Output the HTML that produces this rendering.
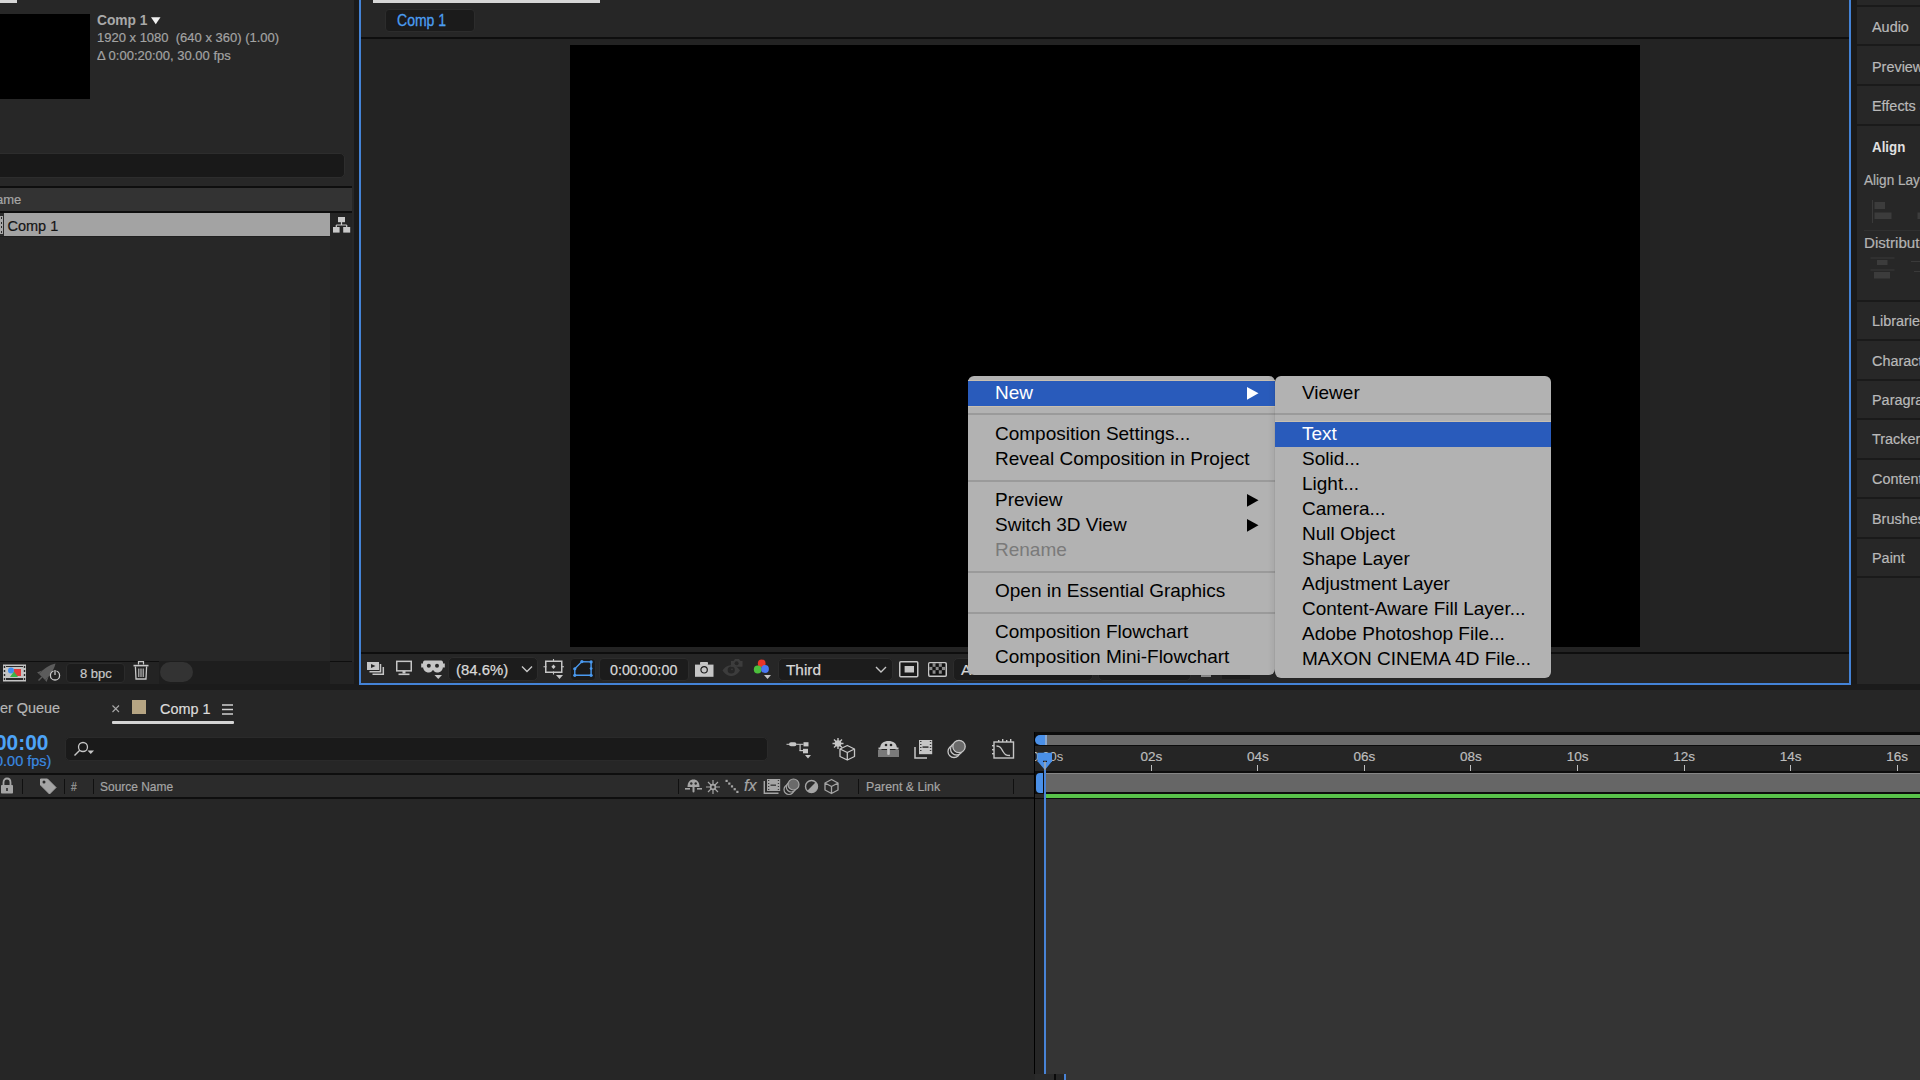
<!DOCTYPE html>
<html><head><meta charset="utf-8"><style>
html,body{margin:0;padding:0;width:1920px;height:1080px;overflow:hidden;background:#1a1a1a;}
body{position:relative;font-family:"Liberation Sans",sans-serif;}
body>div,body>svg{position:absolute;}
.t{white-space:pre;}
</style></head><body>
<div style="left:0px;top:0px;width:354px;height:684px;background:#272727;"></div>
<div style="left:0px;top:0px;width:17px;height:3px;background:#d6d6d6;"></div>
<div style="left:0px;top:14px;width:90px;height:85px;background:#000;"></div>
<div class="t" style="left:97px;top:12px;font-size:14.5px;line-height:16px;color:#a9a9a9;font-weight:700;transform:scaleX(0.95);transform-origin:0 0;">Comp 1</div>
<svg style="left:151px;top:17px;" width="10" height="8" viewBox="0 0 10 8"><path d="M0 0.3 L9.5 0.3 L4.75 7.3 Z" fill="#f0f0f0"/></svg>
<div class="t" style="left:97px;top:30px;font-size:13px;line-height:15px;color:#a3a3a3;font-weight:400;-webkit-text-stroke:0.2px #a3a3a3;">1920 x 1080 &nbsp;(640 x 360) (1.00)</div>
<div class="t" style="left:97px;top:48px;font-size:13px;line-height:15px;color:#a3a3a3;font-weight:400;-webkit-text-stroke:0.2px #a3a3a3;">Δ 0:00:20:00, 30.00 fps</div>
<div style="left:-6px;top:152.5px;width:351px;height:25px;background:#191919;border:1px solid #2d2d2d;border-radius:5px;box-sizing:border-box;"></div>
<div style="left:0px;top:186px;width:352px;height:2px;background:#0e0e0e;"></div>
<div style="left:0px;top:188px;width:352px;height:23px;background:#333333;"></div>
<div class="t" style="left:-4px;top:192px;font-size:13px;line-height:15px;color:#a6a6a6;font-weight:400;-webkit-text-stroke:0.2px #a6a6a6;">ame</div>
<div style="left:0px;top:211px;width:352px;height:2px;background:#0e0e0e;"></div>
<div style="left:330px;top:213px;width:22px;height:448px;background:#242424;"></div>
<div style="left:0px;top:213px;width:4px;height:23px;background:#2b2b2b;"></div>
<div style="left:0px;top:216px;width:3.2px;height:18px;background:#a8a8a8;"></div>
<div style="left:0.8px;top:217px;width:1.6px;height:2px;background:#2a2a2a;"></div>
<div style="left:0.8px;top:221.5px;width:1.6px;height:2px;background:#2a2a2a;"></div>
<div style="left:0.8px;top:226px;width:1.6px;height:2px;background:#2a2a2a;"></div>
<div style="left:0.8px;top:230.5px;width:1.6px;height:2px;background:#2a2a2a;"></div>
<div style="left:4px;top:213px;width:326px;height:23px;background:#a3a3a3;"></div>
<div class="t" style="left:7.5px;top:218px;font-size:14.5px;line-height:16px;color:#141414;font-weight:400;-webkit-text-stroke:0.2px #141414;">Comp 1</div>
<div style="left:0px;top:236px;width:330px;height:1px;background:#1f1f1f;"></div>
<svg style="left:332px;top:216px;" width="20" height="18" viewBox="0 0 20 18"><rect x="6" y="1" width="7" height="5.2" fill="#c8c8c8"/><path d="M9.5 6 V9 M4.3 9 H14.7 M4.3 9 V11 M14.7 9 V11" stroke="#c8c8c8" stroke-width="1.2" fill="none"/><rect x="1" y="11" width="6.6" height="5.6" fill="#c8c8c8"/><rect x="11.2" y="11" width="7" height="5.6" fill="#c8c8c8"/></svg>
<div style="left:0px;top:661px;width:159px;height:1px;background:#0e0e0e;"></div>
<div style="left:330px;top:661px;width:22px;height:1px;background:#0e0e0e;"></div>
<div style="left:0px;top:662px;width:354px;height:22px;background:#232323;"></div>
<div style="left:159px;top:661px;width:171px;height:23px;background:#1e1e1e;"></div>
<svg style="left:3px;top:664px;" width="24" height="19" viewBox="0 0 24 19"><rect x="0" y="0.5" width="23" height="17" fill="#c4c4c4"/><rect x="3" y="2" width="17" height="14" fill="#2a2a2a"/><g fill="#2a2a2a"><rect x="0.8" y="2" width="1.4" height="2"/><rect x="0.8" y="6" width="1.4" height="2"/><rect x="0.8" y="10" width="1.4" height="2"/><rect x="0.8" y="14" width="1.4" height="2"/><rect x="20.8" y="2" width="1.4" height="2"/><rect x="20.8" y="6" width="1.4" height="2"/><rect x="20.8" y="10" width="1.4" height="2"/><rect x="20.8" y="14" width="1.4" height="2"/></g><rect x="3" y="3" width="17" height="11" fill="#c4c4c4"/><circle cx="8" cy="6.5" r="3" fill="#3f8ef0"/><rect x="11" y="5" width="7" height="7" fill="#e23c3c"/><path d="M7 13 L11 7.5 L15 13 Z" fill="#3bb24a"/></svg>
<svg style="left:36px;top:661px;" width="26" height="22" viewBox="0 0 26 22"><path d="M3 13 C7 8 13 4 19.5 2.5 C18 9 14 15 9 19 Z" fill="#5c5c5c"/><path d="M3 13 L1 11.5 L6 9.5 Z M9 19 L10.5 21 L12.5 16 Z" fill="#5c5c5c"/><path d="M6 16 L2.5 19.5" stroke="#5c5c5c" stroke-width="1.5"/><circle cx="19" cy="14.4" r="4.6" fill="#222" stroke="#c8c8c8" stroke-width="1.3"/><rect x="17.6" y="8.5" width="2.8" height="5" fill="#222"/><path d="M19 9 V14" stroke="#c8c8c8" stroke-width="1.3"/></svg>
<div style="left:66px;top:663px;width:59px;height:20px;background:#1c1c1c;border:1px solid #2b2b2b;border-radius:4px;box-sizing:border-box;"></div>
<div class="t" style="left:80px;top:666px;font-size:13px;line-height:15px;color:#c8c8c8;font-weight:400;-webkit-text-stroke:0.2px #c8c8c8;">8 bpc</div>
<svg style="left:132px;top:660px;" width="18" height="21" viewBox="0 0 18 21"><path d="M6.5 4.5 V1.6 H11.5 V4.5" stroke="#c8c8c8" stroke-width="1.2" fill="none"/><rect x="1.5" y="4.8" width="15" height="1.6" fill="#c8c8c8"/><path d="M3.4 6.5 L4 19 H14 L14.6 6.5" stroke="#c8c8c8" stroke-width="1.3" fill="none"/><path d="M6.8 8.5 V17 M9 8.5 V17 M11.2 8.5 V17" stroke="#c8c8c8" stroke-width="1.1"/></svg>
<div style="left:160px;top:662px;width:33px;height:20px;background:#333333;border-radius:10px;"></div>
<div style="left:359px;top:-2px;width:1492px;height:687px;background:#232323;border:2px solid #4483d6;box-sizing:border-box;"></div>
<div style="left:361px;top:0px;width:1488px;height:37px;background:#262626;"></div>
<div style="left:373px;top:0px;width:227px;height:3px;background:#d6d6d6;"></div>
<div style="left:385px;top:9px;width:90px;height:23px;background:#1b1b1b;border:1px solid #2c2c2c;border-radius:4px;box-sizing:border-box;"></div>
<div class="t" style="left:397px;top:11px;font-size:16.5px;line-height:18px;color:#4b9ef2;font-weight:400;transform:scaleX(0.85);transform-origin:0 0;-webkit-text-stroke:0.3px #4b9ef2;">Comp 1</div>
<div style="left:361px;top:37px;width:1488px;height:2px;background:#0e0e0e;"></div>
<div style="left:570px;top:45px;width:1070px;height:602px;background:#000;"></div>
<div style="left:361px;top:652px;width:1488px;height:2px;background:#0e0e0e;"></div>
<div style="left:361px;top:654px;width:1488px;height:29px;background:#262626;"></div>
<svg style="left:365px;top:660px;" width="22" height="18" viewBox="0 0 22 18"><rect x="2" y="2" width="12" height="8" fill="#c6c6c6"/><path d="M6 4 L10.5 6 L6 8 Z" fill="#262626"/><path d="M4.5 11.8 H15.5 V4" stroke="#c6c6c6" stroke-width="1.5" fill="none"/><path d="M7.5 14.3 H18.3 V7" stroke="#c6c6c6" stroke-width="1.5" fill="none"/></svg>
<svg style="left:394px;top:659px;" width="20" height="18" viewBox="0 0 20 18"><rect x="2.75" y="2.35" width="14.5" height="9.5" fill="none" stroke="#c6c6c6" stroke-width="1.5"/><rect x="8.5" y="12" width="3" height="2.5" fill="#c6c6c6"/><rect x="4.5" y="14.5" width="11" height="1.6" fill="#c6c6c6"/></svg>
<svg style="left:420px;top:659px;" width="26" height="22" viewBox="0 0 26 22"><path d="M3 3.5 C3 1.8 4.5 1.5 6 1.5 H20 C21.5 1.5 23 1.8 23 3.5 V7 C23 11 21 13.5 17 13.5 C15 13.5 14 12 13 11 C12 12 11 13.5 9 13.5 C5 13.5 3 11 3 7 Z" fill="#c6c6c6"/><circle cx="8.8" cy="6.8" r="2" fill="#262626"/><circle cx="17" cy="6.8" r="2" fill="#262626"/><rect x="1.2" y="4.5" width="1.8" height="4" fill="#c6c6c6"/><rect x="23" y="4.5" width="1.8" height="4" fill="#c6c6c6"/><path d="M14.5 16 H22 L18.25 20 Z" fill="#c6c6c6"/></svg>
<div style="left:448px;top:657px;width:90px;height:24px;background:#1c1c1c;border:1px solid #2c2c2c;border-radius:5px;box-sizing:border-box;"></div>
<div class="t" style="left:456px;top:661px;font-size:15.5px;line-height:17px;color:#d8d8d8;font-weight:400;transform:scaleX(0.96);transform-origin:0 0;-webkit-text-stroke:0.25px #d8d8d8;">(84.6%)</div>
<svg style="left:520px;top:664px;" width="14" height="10" viewBox="0 0 14 10"><path d="M2 2.5 L7 7.5 L12 2.5" stroke="#c6c6c6" stroke-width="1.4" fill="none"/></svg>
<svg style="left:542px;top:658px;" width="23" height="23" viewBox="0 0 23 23"><rect x="3.75" y="3.25" width="16" height="11" fill="none" stroke="#c6c6c6" stroke-width="1.5"/><path d="M11.5 1 V4 M11.5 13.5 V16.5 M1.5 8.75 H4.5 M19 8.75 H22" stroke="#c6c6c6" stroke-width="1.1"/><path d="M11.5 6.6 L13.6 8.75 L11.5 10.9 L9.4 8.75 Z" fill="#c6c6c6"/><path d="M14 17 H21 L17.5 21 Z" fill="#c6c6c6"/></svg>
<div style="left:570px;top:658px;width:26px;height:23px;background:#1a1a1a;border:1px solid #2a2a2a;border-radius:4px;box-sizing:border-box;"></div>
<svg style="left:572px;top:659px;" width="22" height="20" viewBox="0 0 22 20"><path d="M2.8 9.75 L9.9 2.6 L19.1 2.9 V16.3 H2.8 Z" fill="none" stroke="#4a9af0" stroke-width="1.4"/><g fill="#4a9af0"><circle cx="2.8" cy="9.75" r="1.6"/><circle cx="9.9" cy="2.6" r="1.6"/><circle cx="19.1" cy="2.9" r="1.6"/><circle cx="19.1" cy="9.6" r="1.4"/><circle cx="19.1" cy="16.3" r="1.6"/><circle cx="2.8" cy="16.3" r="1.6"/></g></svg>
<div style="left:599px;top:658px;width:90px;height:23px;background:#1c1c1c;border:1px solid #2c2c2c;border-radius:4px;box-sizing:border-box;"></div>
<div class="t" style="left:610px;top:661px;font-size:15.5px;line-height:17px;color:#d8d8d8;font-weight:400;transform:scaleX(0.92);transform-origin:0 0;-webkit-text-stroke:0.25px #d8d8d8;">0:00:00:00</div>
<svg style="left:694px;top:660px;" width="21" height="18" viewBox="0 0 21 18"><rect x="1" y="4.6" width="18.5" height="12.2" fill="#c6c6c6"/><rect x="6" y="2" width="8" height="3" fill="#c6c6c6" rx="0.8"/><circle cx="10.1" cy="9.8" r="3.2" fill="none" stroke="#1e1e1e" stroke-width="1.2"/></svg>
<svg style="left:720px;top:656px;" width="26" height="23" viewBox="0 0 26 23"><path d="M2.5 14.5 C5.5 10 9 9.3 11.25 9.3 C13.5 9.3 17 10 20 14.5 C17 19 13.5 20 11.25 20 C9 20 5.5 19 2.5 14.5 Z" fill="#3c3c3c"/><circle cx="11.25" cy="14" r="3.6" fill="#262626"/><circle cx="12" cy="13.3" r="0.9" fill="#3c3c3c"/><path d="M11 5 H13.5 L15 3 H19 L20.5 5 H22.5 V10.8 H11 Z" fill="#3c3c3c"/><circle cx="16.6" cy="7.3" r="2" fill="#262626"/></svg>
<svg style="left:752px;top:657px;" width="22" height="24" viewBox="0 0 22 24"><circle cx="9.7" cy="6.4" r="3.9" fill="#e8352a"/><circle cx="5.7" cy="12.5" r="3.9" fill="#4cbf3c"/><circle cx="13" cy="12" r="3.9" fill="#4a78f2"/><path d="M12 18 H19 L15.5 22 Z" fill="#c6c6c6"/></svg>
<div style="left:778px;top:658px;width:115px;height:23px;background:#1c1c1c;border:1px solid #2c2c2c;border-radius:5px;box-sizing:border-box;"></div>
<div class="t" style="left:786px;top:661px;font-size:15.5px;line-height:17px;color:#d8d8d8;font-weight:400;transform:scaleX(0.99);transform-origin:0 0;-webkit-text-stroke:0.25px #d8d8d8;">Third</div>
<svg style="left:874px;top:665px;" width="14" height="9" viewBox="0 0 14 9"><path d="M2 2 L7 7 L12 2" stroke="#c6c6c6" stroke-width="1.4" fill="none"/></svg>
<svg style="left:898px;top:660px;" width="22" height="19" viewBox="0 0 22 19"><rect x="1.75" y="1.75" width="18" height="15" fill="#1a1a1a" stroke="#c6c6c6" stroke-width="1.5" rx="1"/><rect x="6.6" y="6" width="9.4" height="6.5" fill="#c6c6c6"/></svg>
<svg style="left:927px;top:661px;" width="21" height="17" viewBox="0 0 21 17"><rect x="1.75" y="1.75" width="17.5" height="13.5" fill="#111" stroke="#c6c6c6" stroke-width="1.5" rx="1"/><rect x="2.50" y="2.50" width="3.1" height="3.4" fill="#111"/><rect x="5.60" y="2.50" width="3.1" height="3.4" fill="#8a8a8a"/><rect x="8.70" y="2.50" width="3.1" height="3.4" fill="#111"/><rect x="11.80" y="2.50" width="3.1" height="3.4" fill="#8a8a8a"/><rect x="14.90" y="2.50" width="3.1" height="3.4" fill="#111"/><rect x="2.50" y="5.90" width="3.1" height="3.4" fill="#8a8a8a"/><rect x="5.60" y="5.90" width="3.1" height="3.4" fill="#111"/><rect x="8.70" y="5.90" width="3.1" height="3.4" fill="#8a8a8a"/><rect x="11.80" y="5.90" width="3.1" height="3.4" fill="#111"/><rect x="14.90" y="5.90" width="3.1" height="3.4" fill="#8a8a8a"/><rect x="2.50" y="9.30" width="3.1" height="3.4" fill="#111"/><rect x="5.60" y="9.30" width="3.1" height="3.4" fill="#8a8a8a"/><rect x="8.70" y="9.30" width="3.1" height="3.4" fill="#111"/><rect x="11.80" y="9.30" width="3.1" height="3.4" fill="#8a8a8a"/><rect x="14.90" y="9.30" width="3.1" height="3.4" fill="#111"/></svg>
<div style="left:953px;top:658px;width:140px;height:23px;background:#1c1c1c;border:1px solid #2c2c2c;border-radius:5px;box-sizing:border-box;"></div>
<div class="t" style="left:961px;top:661px;font-size:15.5px;line-height:17px;color:#d8d8d8;font-weight:400;-webkit-text-stroke:0.2px #d8d8d8;">A</div>
<div style="left:1098px;top:658px;width:93px;height:23px;background:#1c1c1c;border:1px solid #2c2c2c;border-radius:5px;box-sizing:border-box;"></div>
<div style="left:1201px;top:675px;width:10px;height:1.5px;background:#8a8a8a;"></div>
<div style="left:1226px;top:675px;width:10px;height:1.5px;background:#8a8a8a;"></div>
<div style="left:1222px;top:674px;width:28px;height:5px;background:#1c1c1c;"></div>
<div style="left:1857px;top:0px;width:63px;height:684px;background:#272727;"></div>
<div style="left:1857px;top:5px;width:63px;height:2px;background:#1a1a1a;"></div>
<div style="left:1857px;top:44px;width:63px;height:2px;background:#1a1a1a;"></div>
<div style="left:1857px;top:84px;width:63px;height:2px;background:#1a1a1a;"></div>
<div style="left:1857px;top:124px;width:63px;height:2px;background:#1a1a1a;"></div>
<div style="left:1857px;top:300px;width:63px;height:2px;background:#1a1a1a;"></div>
<div style="left:1857px;top:339px;width:63px;height:2px;background:#1a1a1a;"></div>
<div style="left:1857px;top:379px;width:63px;height:2px;background:#1a1a1a;"></div>
<div style="left:1857px;top:418px;width:63px;height:2px;background:#1a1a1a;"></div>
<div style="left:1857px;top:458px;width:63px;height:2px;background:#1a1a1a;"></div>
<div style="left:1857px;top:497px;width:63px;height:2px;background:#1a1a1a;"></div>
<div style="left:1857px;top:537px;width:63px;height:2px;background:#1a1a1a;"></div>
<div style="left:1857px;top:576px;width:63px;height:2px;background:#1a1a1a;"></div>
<div class="t" style="left:1872px;top:18px;font-size:15.5px;line-height:17px;color:#b9b9b9;font-weight:400;-webkit-text-stroke:0.2px #b9b9b9;transform:scaleX(0.93);transform-origin:0 0;">Audio</div>
<div class="t" style="left:1872px;top:58px;font-size:15.5px;line-height:17px;color:#b9b9b9;font-weight:400;-webkit-text-stroke:0.2px #b9b9b9;transform:scaleX(0.93);transform-origin:0 0;">Preview</div>
<div class="t" style="left:1872px;top:97px;font-size:15.5px;line-height:17px;color:#b9b9b9;font-weight:400;-webkit-text-stroke:0.2px #b9b9b9;transform:scaleX(0.93);transform-origin:0 0;">Effects &amp;</div>
<div class="t" style="left:1872px;top:312px;font-size:15.5px;line-height:17px;color:#b9b9b9;font-weight:400;-webkit-text-stroke:0.2px #b9b9b9;transform:scaleX(0.93);transform-origin:0 0;">Libraries</div>
<div class="t" style="left:1872px;top:352px;font-size:15.5px;line-height:17px;color:#b9b9b9;font-weight:400;-webkit-text-stroke:0.2px #b9b9b9;transform:scaleX(0.93);transform-origin:0 0;">Character</div>
<div class="t" style="left:1872px;top:391px;font-size:15.5px;line-height:17px;color:#b9b9b9;font-weight:400;-webkit-text-stroke:0.2px #b9b9b9;transform:scaleX(0.93);transform-origin:0 0;">Paragraph</div>
<div class="t" style="left:1872px;top:430px;font-size:15.5px;line-height:17px;color:#b9b9b9;font-weight:400;-webkit-text-stroke:0.2px #b9b9b9;transform:scaleX(0.93);transform-origin:0 0;">Tracker</div>
<div class="t" style="left:1872px;top:470px;font-size:15.5px;line-height:17px;color:#b9b9b9;font-weight:400;-webkit-text-stroke:0.2px #b9b9b9;transform:scaleX(0.93);transform-origin:0 0;">Content</div>
<div class="t" style="left:1872px;top:510px;font-size:15.5px;line-height:17px;color:#b9b9b9;font-weight:400;-webkit-text-stroke:0.2px #b9b9b9;transform:scaleX(0.93);transform-origin:0 0;">Brushes</div>
<div class="t" style="left:1872px;top:549px;font-size:15.5px;line-height:17px;color:#b9b9b9;font-weight:400;-webkit-text-stroke:0.2px #b9b9b9;transform:scaleX(0.93);transform-origin:0 0;">Paint</div>
<div class="t" style="left:1872px;top:138px;font-size:15.5px;line-height:17px;color:#e0e0e0;font-weight:700;transform:scaleX(0.86);transform-origin:0 0;">Align</div>
<div class="t" style="left:1864px;top:172px;font-size:14px;line-height:16px;color:#b3b3b3;font-weight:400;-webkit-text-stroke:0.2px #b3b3b3;transform:scaleX(0.97);transform-origin:0 0;">Align Layers to:</div>
<div class="t" style="left:1864px;top:235px;font-size:14px;line-height:16px;color:#b3b3b3;font-weight:400;-webkit-text-stroke:0.2px #b3b3b3;transform:scaleX(1.08);transform-origin:0 0;">Distribute Layers:</div>
<div style="left:1864px;top:229.5px;width:56px;height:1px;background:#303030;"></div>
<svg style="left:1870px;top:199px;" width="50" height="25" viewBox="0 0 50 25"><rect x="2" y="1" width="1" height="23" fill="#3a3a3a"/><rect x="4.5" y="3" width="10.5" height="7" fill="#3c3c3c"/><rect x="4.5" y="13.5" width="17" height="6.5" fill="#3c3c3c"/><rect x="47.5" y="13.5" width="3" height="6.5" fill="#3c3c3c"/></svg>
<svg style="left:1868px;top:256px;" width="52" height="25" viewBox="0 0 52 25"><rect x="2.5" y="1.5" width="24" height="1" fill="#3a3a3a"/><rect x="9" y="4" width="10.5" height="5" fill="#3c3c3c"/><rect x="2.5" y="13.5" width="24" height="1" fill="#3a3a3a"/><rect x="6" y="16" width="16" height="6.5" fill="#3c3c3c"/><rect x="43" y="5" width="9" height="1" fill="#3a3a3a"/><rect x="46" y="15" width="6" height="1" fill="#3a3a3a"/></svg>
<div style="left:0px;top:684px;width:359px;height:6px;background:#1b1b1b;"></div>
<div style="left:359px;top:685px;width:1492px;height:5px;background:#1b1b1b;"></div>
<div style="left:1851px;top:684px;width:69px;height:6px;background:#1b1b1b;"></div>
<div style="left:0px;top:690px;width:1920px;height:390px;background:#262626;"></div>
<div class="t" style="left:0px;top:699px;font-size:15.5px;line-height:17px;color:#b5b5b5;font-weight:400;-webkit-text-stroke:0.2px #b5b5b5;transform:scaleX(0.93);transform-origin:0 0;">er Queue</div>
<svg style="left:110px;top:703px;" width="12" height="12" viewBox="0 0 12 12"><path d="M2.5 2.5 L9 9 M9 2.5 L2.5 9" stroke="#a8a8a8" stroke-width="1.1"/></svg>
<div style="left:132px;top:700px;width:14px;height:14px;background:#b6a583;"></div>
<div class="t" style="left:160px;top:700px;font-size:15.5px;line-height:17px;color:#dcdcdc;font-weight:400;-webkit-text-stroke:0.2px #dcdcdc;transform:scaleX(0.93);transform-origin:0 0;">Comp 1</div>
<svg style="left:221px;top:703px;" width="14" height="13" viewBox="0 0 14 13"><path d="M1 2 H12 M1 6.5 H12 M1 11 H12" stroke="#cfcfcf" stroke-width="1.3"/></svg>
<div style="left:112px;top:721px;width:122px;height:3px;background:#d4d4d4;border-radius:1px;"></div>
<div class="t" style="left:-5.4px;top:731px;font-size:21.4px;line-height:24px;color:#4da3f7;font-weight:700;transform:scaleX(0.975);transform-origin:0 0;">00:00</div>
<div class="t" style="left:-5px;top:753px;font-size:14.5px;line-height:16px;color:#3a8ae0;font-weight:400;-webkit-text-stroke:0.2px #3a8ae0;">0.00 fps)</div>
<div style="left:65px;top:737px;width:703px;height:24px;background:#1a1a1a;border:1px solid #2a2a2a;border-radius:5px;box-sizing:border-box;"></div>
<svg style="left:72px;top:740px;" width="26" height="18" viewBox="0 0 26 18"><circle cx="11" cy="7" r="4.5" fill="none" stroke="#c6c6c6" stroke-width="1.3"/><path d="M7.8 10.2 L2.5 15.5" stroke="#c6c6c6" stroke-width="1.4"/><path d="M15.5 10.5 H22 L18.75 14 Z" fill="#c6c6c6"/></svg>
<svg style="left:786px;top:740px;" width="28" height="21" viewBox="0 0 28 21"><rect x="3" y="2.3" width="7.5" height="4" rx="2" fill="#c6c6c6"/><rect x="0.5" y="3.8" width="3" height="1" fill="#c6c6c6"/><rect x="10.5" y="3.8" width="7" height="1" fill="#c6c6c6"/><rect x="17.5" y="2.2" width="5" height="4.2" fill="#c6c6c6"/><rect x="13.5" y="4.3" width="1.2" height="6.5" fill="#c6c6c6"/><rect x="13.5" y="10" width="4" height="1.2" fill="#c6c6c6"/><rect x="17" y="8.8" width="5" height="4.5" fill="#c6c6c6"/><path d="M19 15 H25 L22 18.5 Z" fill="#c6c6c6"/></svg>
<svg style="left:830px;top:736px;" width="28" height="26" viewBox="0 0 28 26"><g stroke="#c6c6c6" stroke-width="1.4"><path d="M8 2 V13 M2.5 7.5 H13.5 M4 3.5 L12 11.5 M12 3.5 L4 11.5"/></g><circle cx="8" cy="7.5" r="3.3" fill="#c6c6c6"/><path d="M17.3 9.5 L24.5 13 V20.5 L17.3 24 L10 20.5 V13 Z M10 13 L17.3 16.5 L24.5 13 M17.3 16.5 V24" fill="none" stroke="#c6c6c6" stroke-width="1.3" stroke-linejoin="round"/></svg>
<svg style="left:876px;top:739px;" width="26" height="22" viewBox="0 0 26 22"><rect x="2" y="11" width="21" height="7" fill="#7a7a7a"/><path d="M4 10 C4 4 8 2 12.5 2 C17 2 21 4 21 10 Z" fill="#c6c6c6"/><rect x="2.5" y="8.5" width="3" height="2" fill="#c6c6c6"/><rect x="19.5" y="8.5" width="3" height="2" fill="#c6c6c6"/><circle cx="10" cy="6" r="1.3" fill="#262626"/><circle cx="15" cy="6" r="1.3" fill="#262626"/><rect x="11.2" y="9" width="2.6" height="7" rx="1.3" fill="#c6c6c6"/></svg>
<svg style="left:912px;top:738px;" width="23" height="22" viewBox="0 0 23 22"><path d="M3 9 V20 H15" stroke="#c6c6c6" stroke-width="1.5" fill="none"/><rect x="7" y="2" width="13.2" height="14.2" fill="#c6c6c6"/><g fill="#3a3a3a"><rect x="8" y="3" width="1.5" height="1"/><rect x="8" y="6" width="1.5" height="1"/><rect x="8" y="9" width="1.5" height="1"/><rect x="8" y="12" width="1.5" height="1"/><rect x="17.8" y="3" width="1.5" height="1"/><rect x="17.8" y="6" width="1.5" height="1"/><rect x="17.8" y="9" width="1.5" height="1"/><rect x="17.8" y="12" width="1.5" height="1"/><rect x="10.5" y="8.3" width="6" height="1.6"/></g></svg>
<svg style="left:946px;top:738px;" width="24" height="22" viewBox="0 0 24 22"><circle cx="8" cy="13.5" r="6" fill="none" stroke="#c6c6c6" stroke-width="1.3"/><circle cx="10.5" cy="11" r="6" fill="#262626" stroke="#c6c6c6" stroke-width="1.3"/><circle cx="13" cy="8.5" r="6.2" fill="#6a6a6a" stroke="#c6c6c6" stroke-width="1.3"/></svg>
<svg style="left:991px;top:738px;" width="25" height="22" viewBox="0 0 25 22"><rect x="3" y="4" width="19.5" height="16" fill="none" stroke="#c6c6c6" stroke-width="1.4"/><g fill="#c6c6c6"><rect x="7" y="2" width="1.4" height="2"/><rect x="11" y="1" width="1.4" height="3"/><rect x="15" y="2" width="1.4" height="2"/><rect x="19" y="1" width="1.4" height="3"/><rect x="1" y="7" width="2" height="1.4"/><rect x="1" y="11" width="2" height="1.4"/><rect x="1" y="15" width="2" height="1.4"/></g><path d="M5.5 8 C9 8 10 10 12 13.5 C14 17 15.5 17.5 19 17.5" stroke="#c6c6c6" stroke-width="1.3" fill="none"/></svg>
<div style="left:0px;top:773px;width:1034px;height:2px;background:#0e0e0e;"></div>
<div style="left:0px;top:775px;width:1034px;height:22px;background:#2b2b2b;"></div>
<div style="left:0px;top:797px;width:1034px;height:2px;background:#0e0e0e;"></div>
<svg style="left:0px;top:777px;" width="16" height="18" viewBox="0 0 16 18"><path d="M3.5 8 V5.5 C3.5 3 5 1.5 7 1.5 C9 1.5 10.5 3 10.5 5.5 V8" stroke="#a5a5a5" stroke-width="1.8" fill="none"/><rect x="1" y="8" width="12" height="8.5" rx="0.8" fill="#a5a5a5"/><rect x="6.2" y="11" width="1.6" height="3" fill="#2b2b2b"/></svg>
<div style="left:22px;top:779px;width:1.2px;height:15px;background:#101010;"></div>
<div style="left:64px;top:779px;width:1.2px;height:15px;background:#101010;"></div>
<div style="left:93px;top:779px;width:1.2px;height:15px;background:#101010;"></div>
<div style="left:678px;top:779px;width:1.2px;height:15px;background:#101010;"></div>
<div style="left:858px;top:779px;width:1.2px;height:15px;background:#101010;"></div>
<div style="left:1013px;top:779px;width:1.2px;height:15px;background:#101010;"></div>
<svg style="left:39px;top:777px;" width="19" height="19" viewBox="0 0 19 19"><path d="M1.5 2 H8.5 L17 10.5 L10.5 17 L1.5 8 Z" fill="#a5a5a5" stroke="#a5a5a5" stroke-width="1" stroke-linejoin="round"/><circle cx="5" cy="5" r="1.5" fill="#2b2b2b"/></svg>
<div class="t" style="left:71px;top:780px;font-size:12px;line-height:14px;color:#a0a0a0;font-weight:400;-webkit-text-stroke:0.2px #a0a0a0;transform:scaleX(0.85);transform-origin:0 0;">#</div>
<div class="t" style="left:100px;top:779px;font-size:13px;line-height:15px;color:#a5a5a5;font-weight:400;-webkit-text-stroke:0.2px #a5a5a5;transform:scaleX(0.92);transform-origin:0 0;">Source Name</div>
<div class="t" style="left:866px;top:779px;font-size:13px;line-height:15px;color:#a5a5a5;font-weight:400;-webkit-text-stroke:0.2px #a5a5a5;transform:scaleX(0.95);transform-origin:0 0;">Parent &amp; Link</div>
<svg style="left:684px;top:777px;" width="19" height="18" viewBox="0 0 19 18"><path d="M3.5 10 C3.5 5 6 2.5 9.5 2.5 C13 2.5 15.5 5 15.5 10 Z" fill="#a5a5a5"/><circle cx="7.3" cy="6.5" r="1.2" fill="#2b2b2b"/><circle cx="11.7" cy="6.5" r="1.2" fill="#2b2b2b"/><rect x="1" y="11" width="5" height="1.6" fill="#a5a5a5"/><rect x="13" y="11" width="5" height="1.6" fill="#a5a5a5"/><rect x="8.5" y="9" width="2" height="6.5" rx="1" fill="#a5a5a5"/></svg>
<svg style="left:705px;top:779px;" width="16" height="16" viewBox="0 0 16 16"><g stroke="#a5a5a5" stroke-width="1.2"><path d="M8 1 V15 M1 8 H15 M3 3 L13 13 M13 3 L3 13"/></g><circle cx="8" cy="8" r="3.2" fill="#a5a5a5"/><circle cx="8" cy="8" r="1.5" fill="#2b2b2b"/></svg>
<svg style="left:724px;top:779px;" width="16" height="15" viewBox="0 0 16 15"><rect x="1.5" y="0.8" width="2.2" height="2.2" fill="#a5a5a5"/><rect x="4.2" y="3.5" width="2.2" height="2.2" fill="#a5a5a5"/><rect x="6.9" y="6.3" width="2.2" height="2.2" fill="#a5a5a5"/><rect x="9.6" y="9.1" width="2.2" height="2.2" fill="#a5a5a5"/><rect x="12.3" y="11.8" width="2.2" height="2.2" fill="#a5a5a5"/></svg>
<div class="t" style="left:744px;top:776px;font-size:17px;line-height:19px;color:#a5a5a5;font-weight:400;-webkit-text-stroke:0.2px #a5a5a5;transform:scaleX(0.95);transform-origin:0 0;font-style:italic;">fx</div>
<svg style="left:762px;top:777px;" width="19" height="19" viewBox="0 0 19 19"><path d="M2.3 4 V16.3 H16.5" stroke="#a5a5a5" stroke-width="1.4" fill="none"/><rect x="5" y="2" width="13.2" height="12" fill="#a5a5a5"/><g fill="#3a3a3a"><rect x="6" y="3" width="1.3" height="1"/><rect x="6" y="6" width="1.3" height="1"/><rect x="6" y="9" width="1.3" height="1"/><rect x="6" y="12" width="1.3" height="1"/><rect x="15.8" y="3" width="1.3" height="1"/><rect x="15.8" y="6" width="1.3" height="1"/><rect x="15.8" y="9" width="1.3" height="1"/><rect x="15.8" y="12" width="1.3" height="1"/><rect x="8.5" y="7.5" width="5.5" height="1.4"/></g></svg>
<svg style="left:782px;top:776px;" width="20" height="21" viewBox="0 0 20 21"><circle cx="7" cy="13.5" r="5" fill="none" stroke="#a5a5a5" stroke-width="1.2"/><circle cx="9.3" cy="11" r="5" fill="#2b2b2b" stroke="#a5a5a5" stroke-width="1.2"/><circle cx="11.5" cy="8.5" r="5.5" fill="#6a6a6a" stroke="#a5a5a5" stroke-width="1.2"/></svg>
<svg style="left:803px;top:778px;" width="17" height="17" viewBox="0 0 17 17"><circle cx="8.5" cy="8.5" r="6" fill="#2b2b2b" stroke="#a5a5a5" stroke-width="1.4"/><path d="M12.7 4.2 A6 6 0 0 1 4.3 12.8 Z" fill="#a5a5a5"/></svg>
<svg style="left:823px;top:778px;" width="17" height="17" viewBox="0 0 17 17"><path d="M8.5 1.5 L15 5 V12 L8.5 15.5 L2 12 V5 Z M2 5 L8.5 8.5 L15 5 M8.5 8.5 V15.5" fill="none" stroke="#a5a5a5" stroke-width="1.3" stroke-linejoin="round"/></svg>
<div style="left:1034px;top:732px;width:1px;height:342px;background:#000;"></div>
<div style="left:1035px;top:732px;width:885px;height:67px;background:#0c0c0c;"></div>
<div style="left:1044px;top:734.5px;width:876px;height:10.5px;background:#6b6b6b;"></div>
<div style="left:1035px;top:734.5px;width:10px;height:10.5px;background:#4a90e8;border-radius:5.5px 0 0 5.5px;"></div>
<div style="left:1045px;top:734.5px;width:1.5px;height:10.5px;background:#8aa8d0;"></div>
<div style="left:1035px;top:746px;width:885px;height:25px;background:#252525;"></div>
<div style="left:1045px;top:773px;width:875px;height:19px;background:#666666;"></div>
<div style="left:1036px;top:773px;width:7px;height:19.5px;background:#4a90e8;border-radius:4px 0 0 4px;"></div>
<div style="left:1046px;top:773px;width:874px;height:1px;background:#858585;"></div>
<div style="left:1035px;top:794px;width:9px;height:3.5px;background:#282828;"></div>
<div style="left:1046px;top:794px;width:874px;height:3.5px;background:#59c24a;"></div>
<div style="left:1035px;top:799px;width:9px;height:275px;background:#262626;"></div>
<div style="left:1046px;top:799px;width:874px;height:281px;background:#343434;"></div>
<div style="left:1035px;top:1074px;width:20px;height:6px;background:#2a2a2a;"></div>
<div style="left:1054px;top:1074px;width:2px;height:6px;background:#0a0a0a;"></div>
<div style="left:1056px;top:1074px;width:8px;height:6px;background:#262626;"></div>
<div style="left:1035px;top:746px;width:40px;height:25px;overflow:hidden"><div class="t" style="position:absolute;left:-3.5px;top:3.80px;font-size:13px;line-height:13px;color:#bdbdbd">0:00s</div></div>
<div class="t" style="left:1140.45px;top:749px;font-size:13.5px;line-height:15px;color:#bdbdbd;font-weight:400;-webkit-text-stroke:0.2px #bdbdbd;">02s</div>
<div style="left:1150.5px;top:765px;width:1.3px;height:6px;background:#bdbdbd;"></div>
<div class="t" style="left:1247.0px;top:749px;font-size:13.5px;line-height:15px;color:#bdbdbd;font-weight:400;-webkit-text-stroke:0.2px #bdbdbd;">04s</div>
<div style="left:1257.0px;top:765px;width:1.3px;height:6px;background:#bdbdbd;"></div>
<div class="t" style="left:1353.5500000000002px;top:749px;font-size:13.5px;line-height:15px;color:#bdbdbd;font-weight:400;-webkit-text-stroke:0.2px #bdbdbd;">06s</div>
<div style="left:1363.5px;top:765px;width:1.3px;height:6px;background:#bdbdbd;"></div>
<div class="t" style="left:1460.1000000000001px;top:749px;font-size:13.5px;line-height:15px;color:#bdbdbd;font-weight:400;-webkit-text-stroke:0.2px #bdbdbd;">08s</div>
<div style="left:1470.0px;top:765px;width:1.3px;height:6px;background:#bdbdbd;"></div>
<div class="t" style="left:1566.65px;top:749px;font-size:13.5px;line-height:15px;color:#bdbdbd;font-weight:400;-webkit-text-stroke:0.2px #bdbdbd;">10s</div>
<div style="left:1576.5px;top:765px;width:1.3px;height:6px;background:#bdbdbd;"></div>
<div class="t" style="left:1673.2px;top:749px;font-size:13.5px;line-height:15px;color:#bdbdbd;font-weight:400;-webkit-text-stroke:0.2px #bdbdbd;">12s</div>
<div style="left:1683.5px;top:765px;width:1.3px;height:6px;background:#bdbdbd;"></div>
<div class="t" style="left:1779.75px;top:749px;font-size:13.5px;line-height:15px;color:#bdbdbd;font-weight:400;-webkit-text-stroke:0.2px #bdbdbd;">14s</div>
<div style="left:1790.0px;top:765px;width:1.3px;height:6px;background:#bdbdbd;"></div>
<div class="t" style="left:1886.3000000000002px;top:749px;font-size:13.5px;line-height:15px;color:#bdbdbd;font-weight:400;-webkit-text-stroke:0.2px #bdbdbd;">16s</div>
<div style="left:1896.5px;top:765px;width:1.3px;height:6px;background:#bdbdbd;"></div>
<svg style="left:1036px;top:752px;" width="18" height="20" viewBox="0 0 18 20"><path d="M1.5 0.75 H16 V9.25 L8.9 18 L1.5 9.25 Z" fill="#4a90e8"/><rect x="7" y="8.75" width="4" height="1.3" fill="#1a1a1a"/><rect x="8.3" y="9.5" width="1.4" height="9" fill="#a8a8a8"/></svg>
<div style="left:1044px;top:770px;width:2px;height:304px;background:#4883d6;"></div>
<div style="left:1064px;top:1074px;width:2px;height:6px;background:#4883d6;"></div>
<div style="left:968px;top:376px;width:306.5px;height:299px;background:#b2b2b2;border-radius:6px;box-shadow:0 0 1px rgba(0,0,0,0.4);"></div>
<div style="left:968px;top:381px;width:306.5px;height:25px;background:#295bbb;"></div>
<div style="left:968px;top:380px;width:306.5px;height:1px;background:#c8bfb0;"></div>
<div style="left:968px;top:406px;width:306.5px;height:1px;background:#c8bfb0;"></div>
<div class="t" style="left:995px;top:382px;font-size:19px;line-height:21px;color:#ffffff;font-weight:400;">New</div>
<svg style="left:1246px;top:386px;" width="14" height="15" viewBox="0 0 14 15"><path d="M1 1 L12.5 7.3 L1 13.8 Z" fill="#ffffff"/></svg>
<div style="left:968px;top:413px;width:306.5px;height:2px;background:#9a9a9a;"></div>
<div class="t" style="left:995px;top:423px;font-size:19px;line-height:21px;color:#000;font-weight:400;">Composition Settings...</div>
<div class="t" style="left:995px;top:448px;font-size:19px;line-height:21px;color:#000;font-weight:400;">Reveal Composition in Project</div>
<div style="left:968px;top:479.5px;width:306.5px;height:2px;background:#9a9a9a;"></div>
<div class="t" style="left:995px;top:489px;font-size:19px;line-height:21px;color:#000;font-weight:400;">Preview</div>
<svg style="left:1246px;top:493px;" width="14" height="15" viewBox="0 0 14 15"><path d="M1 1 L12.5 7.3 L1 13.8 Z" fill="#000"/></svg>
<div class="t" style="left:995px;top:514px;font-size:19px;line-height:21px;color:#000;font-weight:400;">Switch 3D View</div>
<svg style="left:1246px;top:518px;" width="14" height="15" viewBox="0 0 14 15"><path d="M1 1 L12.5 7.3 L1 13.8 Z" fill="#000"/></svg>
<div class="t" style="left:995px;top:539px;font-size:19px;line-height:21px;color:#7a7a7a;font-weight:400;">Rename</div>
<div style="left:968px;top:570.5px;width:306.5px;height:2px;background:#9a9a9a;"></div>
<div class="t" style="left:995px;top:580px;font-size:19px;line-height:21px;color:#000;font-weight:400;">Open in Essential Graphics</div>
<div style="left:968px;top:611.5px;width:306.5px;height:2px;background:#9a9a9a;"></div>
<div class="t" style="left:995px;top:621px;font-size:19px;line-height:21px;color:#000;font-weight:400;">Composition Flowchart</div>
<div class="t" style="left:995px;top:646px;font-size:19px;line-height:21px;color:#000;font-weight:400;">Composition Mini-Flowchart</div>
<div style="left:1268px;top:376px;width:6.5px;height:299px;background:linear-gradient(to right, rgba(0,0,0,0), rgba(0,0,0,0.06));border-radius:0 5px 5px 0;"></div>
<div style="left:1275px;top:376px;width:276px;height:302px;background:#b2b2b2;border-radius:6px;box-shadow:0 0 1px rgba(0,0,0,0.4);"></div>
<div class="t" style="left:1302px;top:382px;font-size:19px;line-height:21px;color:#000;font-weight:400;">Viewer</div>
<div style="left:1275px;top:413px;width:276px;height:2px;background:#9a9a9a;"></div>
<div style="left:1275px;top:421px;width:276px;height:1px;background:#c8bfb0;"></div>
<div style="left:1275px;top:422px;width:276px;height:25px;background:#295bbb;"></div>
<div class="t" style="left:1302px;top:423px;font-size:19px;line-height:21px;color:#ffffff;font-weight:400;">Text</div>
<div class="t" style="left:1302px;top:448px;font-size:19px;line-height:21px;color:#000;font-weight:400;">Solid...</div>
<div class="t" style="left:1302px;top:473px;font-size:19px;line-height:21px;color:#000;font-weight:400;">Light...</div>
<div class="t" style="left:1302px;top:498px;font-size:19px;line-height:21px;color:#000;font-weight:400;">Camera...</div>
<div class="t" style="left:1302px;top:523px;font-size:19px;line-height:21px;color:#000;font-weight:400;">Null Object</div>
<div class="t" style="left:1302px;top:548px;font-size:19px;line-height:21px;color:#000;font-weight:400;">Shape Layer</div>
<div class="t" style="left:1302px;top:573px;font-size:19px;line-height:21px;color:#000;font-weight:400;">Adjustment Layer</div>
<div class="t" style="left:1302px;top:598px;font-size:19px;line-height:21px;color:#000;font-weight:400;">Content-Aware Fill Layer...</div>
<div class="t" style="left:1302px;top:623px;font-size:19px;line-height:21px;color:#000;font-weight:400;">Adobe Photoshop File...</div>
<div class="t" style="left:1302px;top:648px;font-size:19px;line-height:21px;color:#000;font-weight:400;">MAXON CINEMA 4D File...</div>
</body></html>
